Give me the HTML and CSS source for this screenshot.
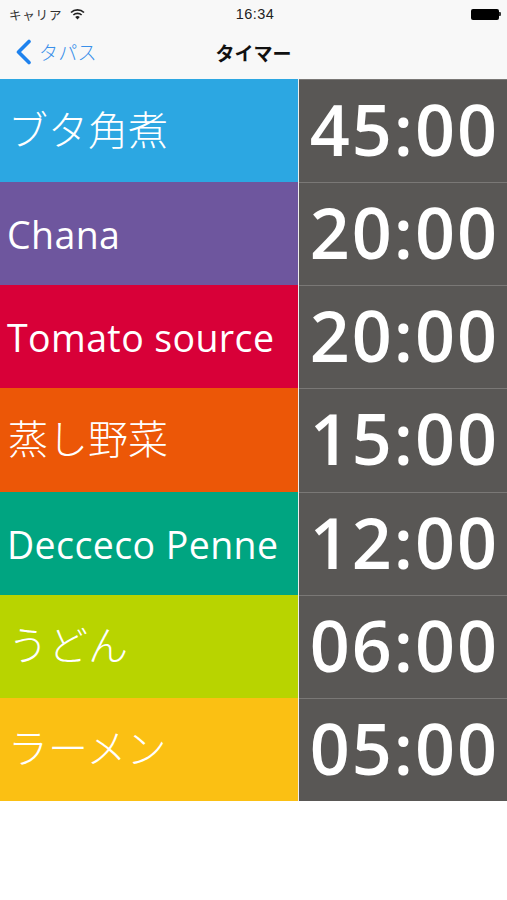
FILE: index.html
```html
<!DOCTYPE html>
<html lang="ja">
<head>
<meta charset="utf-8">
<title>タイマー</title>
<link rel="stylesheet" href="styles.css">
</head>
<body>
<header class="chrome">
  <div class="status">
    <div class="status-left">
      <span class="carrier">キャリア</span>
      <svg class="wifi" width="15" height="11" viewBox="0 0 15 11"><path d="M7.5 10.6 5.2 8a3.3 3.3 0 0 1 4.6 0zM3.9 6.6 2.8 5.4a6.8 6.8 0 0 1 9.4 0l-1.1 1.2a5.2 5.2 0 0 0-7.2 0zM1.6 4.1.4 2.9a10.2 10.2 0 0 1 14.2 0l-1.2 1.2a8.5 8.5 0 0 0-11.8 0z" fill="#222"/></svg>
    </div>
    <span class="clock">16:34</span>
    <div class="battery"><span class="battery-body"></span><span class="battery-tip"></span></div>
  </div>
  <nav class="navbar">
    <a class="back">
      <svg width="17" height="26" viewBox="0 0 17 26"><path d="M14 2.5 3.5 13 14 23.5" fill="none" stroke="#1e82ee" stroke-width="3.6" stroke-linecap="round" stroke-linejoin="round"/></svg>
      <span>タパス</span>
    </a>
    <h1 class="title">タイマー</h1>
  </nav>
</header>
<main class="list">
  <div class="row"><div class="name cjk blue">ブタ角煮</div><div class="time">45:00</div></div>
  <div class="row"><div class="name purple">Chana</div><div class="time">20:00</div></div>
  <div class="row"><div class="name red">Tomato source</div><div class="time">20:00</div></div>
  <div class="row"><div class="name cjk orange">蒸し野菜</div><div class="time">15:00</div></div>
  <div class="row"><div class="name green">Decceco Penne</div><div class="time">12:00</div></div>
  <div class="row"><div class="name cjk lime">うどん</div><div class="time">06:00</div></div>
  <div class="row"><div class="name cjk yellow">ラーメン</div><div class="time">05:00</div></div>
</main>
</body>
</html>
```
FILE: styles.css
```css
* { box-sizing: border-box; }
html, body { margin: 0; padding: 0; }
body {
  width: 507px;
  height: 900px;
  background: #fff;
  overflow: hidden;
  font-family: "Open Sans", "Noto Sans CJK JP", sans-serif;
}
.chrome {
  height: 79px;
  background: #f8f8f8;
  display: flex;
  flex-direction: column;
}
.status {
  height: 27px;
  padding: 1px 6px 0 9px;
  display: grid;
  grid-template-columns: 1fr auto 1fr;
  align-items: center;
}
.status-left { display: flex; align-items: center; gap: 8px; }
.carrier {
  font-family: "Noto Sans CJK JP", sans-serif;
  font-size: 12.5px;
  color: #333;
  letter-spacing: 0.8px;
}
.clock {
  font-family: "Liberation Sans", sans-serif;
  font-size: 14.5px;
  color: #222;
  font-weight: 500;
  letter-spacing: 0.4px;
}
.battery { justify-self: end; display: flex; align-items: center; }
.battery-body {
  width: 28px;
  height: 11px;
  background: #000;
  border-radius: 2px;
}
.battery-tip {
  width: 2px;
  height: 4px;
  background: #333;
  border-radius: 0 1px 1px 0;
}
.navbar {
  flex: 1;
  position: relative;
  display: flex;
  align-items: center;
  justify-content: center;
  padding-bottom: 2px;
}
.back {
  position: absolute;
  left: 15px;
  top: 11px;
  display: flex;
  align-items: center;
  gap: 7px;
  color: #3a90ea;
  font-family: "Noto Sans CJK JP", sans-serif;
  font-size: 19px;
  font-weight: 300;
  letter-spacing: 0.3px;
}
.title {
  margin: 0;
  font-family: "Noto Sans CJK JP", sans-serif;
  font-size: 19px;
  font-weight: 700;
  color: #111;
}
.list { display: flex; flex-direction: column; }
.row {
  height: 103.14px;
  display: grid;
  grid-template-columns: 298px 1px 1fr;
}
.row::before {
  content: "";
  grid-column: 2;
  grid-row: 1;
  background: #eee;
}
.name {
  grid-column: 1;
  grid-row: 1;
  display: flex;
  align-items: center;
  padding: 2px 0 0 7px;
  color: #fff;
  font-size: 37.5px;
  letter-spacing: 0.4px;
  white-space: nowrap;
}
.name.cjk {
  font-family: "Noto Sans CJK JP", sans-serif;
  font-weight: 300;
  font-size: 40px;
  letter-spacing: 0;
  padding: 0 0 6px 8px;
}
.blue { background: #2ca7e2; }
.purple { background: #6e569e; }
.red { background: #d80038; }
.orange { background: #ec5707; }
.green { background: #00a581; }
.lime { background: #b8d400; }
.yellow { background: #fbc013; }
.time {
  grid-column: 3;
  grid-row: 1;
  background: #595755;
  border-top: 1px solid #7a7876;
  color: #fff;
  font-weight: 600;
  font-size: 70px;
  line-height: 1;
  display: flex;
  align-items: center;
  justify-content: flex-end;
  padding: 0 8px 4px 0;
  letter-spacing: 2px;
}
```
